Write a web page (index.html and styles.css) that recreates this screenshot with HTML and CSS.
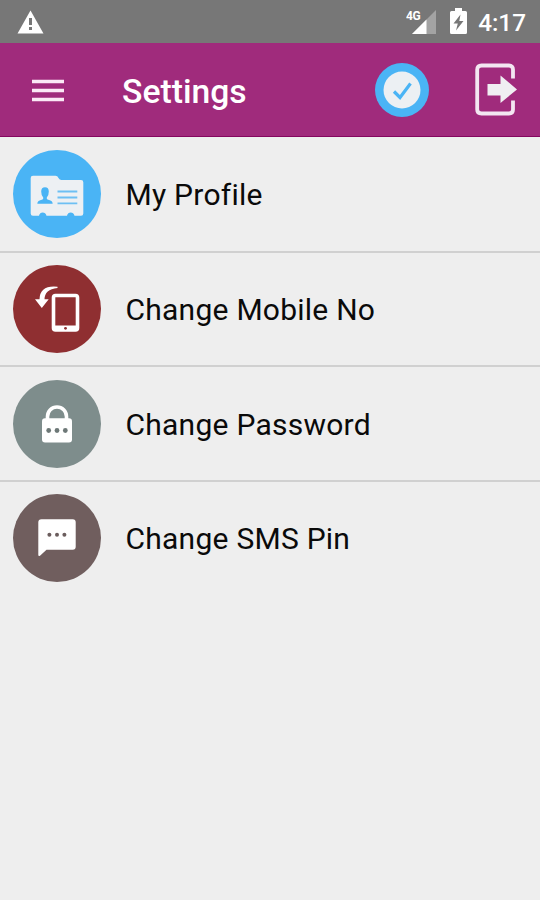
FILE: index.html
```html
<!DOCTYPE html>
<html lang="en">
<head>
  <meta charset="UTF-8" />
  <meta name="viewport" content="width=device-width, initial-scale=1.0"/>
  <title>Settings</title>
  <link rel="stylesheet" href="styles.css">
</head>
<body>
  <div class="status-bar">
    <svg class="warning" width="27" height="24" viewBox="0 0 27 24">
      <path d="M13.5 0.5 L26.5 23.5 H0.5 Z" fill="#fff"/>
      <path d="M12 8h3v7h-3zM12 17h3v3h-3z" fill="#777"/>
    </svg>
    <div class="status-right">
      <svg class="signal" width="31" height="26" viewBox="0 0 31 26">
        <path d="M30 2V26H6Z" fill="#a3a3a3"/>
        <path d="M20.5 11.5V26H6Z" fill="#fff"/>
        <text x="0" y="12" class="network">4G</text>
      </svg>
      <svg class="battery" width="17" height="26" viewBox="0 0 17 26">
        <path d="M5 0h7v3h3.5q1.5 0 1.5 1.5v20q0 1.5-1.5 1.5h-14q-1.5 0-1.5-1.5v-20q0-1.5 1.5-1.5h3.5z" fill="#fff"/>
        <path d="M10.5 6.5 3.5 15.500h4.300L6 22.500 13.500 13H9.300z" fill="#777"/>
      </svg>
      <span class="clock">4:17</span>
    </div>
  </div>

  <header class="toolbar">
    <svg class="menu" width="32" height="23" viewBox="0 0 32 23">
      <path d="M0 2.5H32M0 11.500H32M0 20.500H32" stroke="#fbe9f6" stroke-width="3.600"/>
    </svg>
    <h1>Settings</h1>
    <svg class="check" width="54" height="54" viewBox="0 0 54 54">
      <circle cx="27" cy="27" r="27" fill="#4ab4f5"/>
      <circle cx="27" cy="27" r="18.500" fill="#ecf0f3"/>
      <path d="M19 28.500 25 34.500 35.500 20.500" fill="none" stroke="#4ab4f5" stroke-width="3.200"/>
    </svg>
    <svg class="logout" width="43" height="54" viewBox="0 0 43 54">
      <path d="M38 15.500V6.500Q38 2.500 34 2.500H6.500Q2.200 2.500 2.200 6.500V46.500Q2.200 50.500 6.500 50.500H34Q38 50.500 38 46.500V37.500" fill="none" stroke="#f3e6f1" stroke-width="3.800"/>
      <path d="M12.500 21H25.500V12.500L42 26.500 25.500 40V32.500H12.500Z" fill="#f0eef2"/>
    </svg>
  </header>

  <ul class="settings-list">
    <li>
      <svg class="icon" viewBox="0 0 88 88">
        <circle cx="44" cy="44" r="44" fill="#4ab4f5"/>
        <path d="M20 25.800H42.500Q44.500 25.800 45.500 28 46.500 30 48.500 30H68Q70.300 30 70.300 32.300V63.500Q70.300 65.800 68 65.800H61.500Q60.500 62.500 57.700 62.500T54 65.800H33.500Q32.500 62.500 29.700 62.500T26 65.800H20Q17.700 65.800 17.700 63.500V28Q17.700 25.800 20 25.800Z" fill="#edf0f3"/>
        <path d="M24.300 53.800Q24.300 50.500 29.500 49.500 30.500 49 30.200 47.500 28.200 45.500 28.200 41.500 28.200 37.200 32 37.200T35.800 41.500Q35.800 45.500 33.800 47.500 33.500 49 34.500 49.500 39.700 50.500 39.700 53.800Z" fill="#4ab4f5"/>
        <path d="M44.500 41.500H64.300M44.500 47.500H64.300M44.500 53.300H64.300" stroke="#6dbff3" stroke-width="1.800"/>
      </svg>
      <span>My Profile</span>
    </li>
    <li>
      <svg class="icon" viewBox="0 0 88 88">
        <circle cx="44" cy="44" r="44" fill="#8f2f31"/>
        <rect x="40.500" y="30.500" width="24" height="34.500" rx="2" fill="none" stroke="#fff" stroke-width="3.600"/>
        <path d="M40 60.500H65V65H40Z" fill="#fff"/>
        <circle cx="52.500" cy="63.300" r="1.400" fill="#8f2f31"/>
        <path d="M44.500 21.800Q27 20 26.500 34.300H22L28.800 43 35.700 34.300H31.500Q31.500 24.500 44.500 23Z" fill="#fff"/>
      </svg>
      <span>Change Mobile No</span>
    </li>
    <li>
      <svg class="icon" viewBox="0 0 88 88">
        <circle cx="44" cy="44" r="44" fill="#7e8d8c"/>
        <path d="M34.500 40V36.500A9.500 9.500 0 0 1 53.500 36.500V40" fill="none" stroke="#fff" stroke-width="3.600"/>
        <rect x="29" y="38.300" width="30" height="24.200" rx="3" fill="#fff"/>
        <g fill="#6d7877">
          <circle cx="35.700" cy="50.500" r="2.400"/>
          <circle cx="44" cy="50.500" r="2.400"/>
          <circle cx="52.300" cy="50.500" r="2.400"/>
        </g>
      </svg>
      <span>Change Password</span>
    </li>
    <li>
      <svg class="icon" viewBox="0 0 88 88">
        <circle cx="44" cy="44" r="44" fill="#705e5e"/>
        <path d="M28.500 25.300H59.700Q62.700 25.300 62.700 28.300V52.700Q62.700 55.700 59.700 55.700H33.500L27 61.700Q25.300 62.700 25.300 60.700V28.300Q25.300 25.300 28.500 25.300Z" fill="#fff"/>
        <g fill="#6b5d5d">
          <circle cx="36.400" cy="40.700" r="2"/>
          <circle cx="44" cy="40.700" r="2"/>
          <circle cx="51.400" cy="40.700" r="2"/>
        </g>
      </svg>
      <span>Change SMS Pin</span>
    </li>
  </ul>
</body>
</html>
```
FILE: styles.css
```css
* {
  box-sizing: border-box;
}
body {
  margin: 0;
  min-height: 900px;
  background: #eeeeee;
  font-family: Roboto, "Liberation Sans", sans-serif;
  color: #0a0a0a;
}
.status-bar {
  height: 43px;
  padding: 0 14px 0 17px;
  display: flex;
  justify-content: space-between;
  align-items: flex-start;
  background: #777777;
  color: #fff;
}
.warning {
  margin-top: 10px;
}
.status-right {
  display: flex;
  align-items: flex-start;
}
.signal {
  margin: 8px 13px 0 0;
}
.network {
  font-size: 12px;
  font-weight: 700;
  fill: #fff;
  letter-spacing: -0.5px;
}
.battery {
  margin: 8px 11px 0 0;
}
.clock {
  font-size: 24.3px;
  font-weight: 500;
  line-height: 46px;
}
.toolbar {
  height: 94px;
  padding: 1px 22px 0 32px;
  display: flex;
  align-items: center;
  background: #a02b7c;
  border-bottom: 1px solid #84075f;
}
.toolbar h1 {
  flex: 1;
  margin: 3px 0 0 58px;
  font-size: 33.7px;
  line-height: 40px;
  font-weight: 500;
  color: #fff;
}
.logout {
  margin-left: 46px;
}
.settings-list {
  margin: 0;
  padding: 1px 0 0;
  list-style: none;
}
.settings-list li {
  height: 114.7px;
  padding: 0 13px;
  display: flex;
  align-items: center;
  border-bottom: 2px solid #d0d0d0;
}
.settings-list li:last-child {
  border-bottom-color: transparent;
}
.icon {
  width: 88px;
  height: 88px;
}
.settings-list span {
  margin: 2px 0 0 24.5px;
  font-size: 30px;
  line-height: 40px;
  letter-spacing: 0.25px;
}
```
